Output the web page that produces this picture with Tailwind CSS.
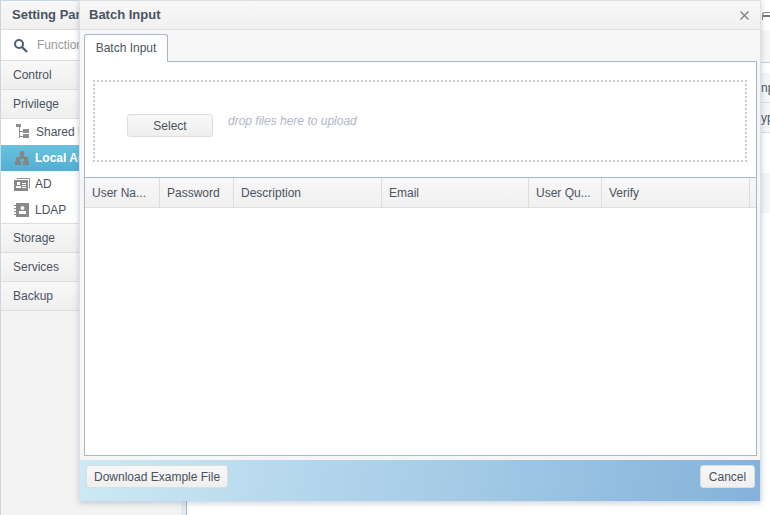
<!DOCTYPE html>
<html lang="en">
<head>
    <meta charset="UTF-8">
    <title>Batch Input</title>
    <script src="https://cdn.jsdelivr.net/npm/@tailwindcss/browser@4"></script>
</head>
<body class="relative w-[770px] h-[515px] overflow-hidden bg-white font-['Liberation_Sans',Arial,sans-serif] text-xs text-[#4a5260]">
    <div class="flex h-full">
        <!-- Setting panel -->
        <aside class="w-[181px] shrink-0 flex flex-col bg-[#f3f3f3] border-l border-t border-[#c9d6e4]">
            <div class="h-[29px] flex items-center pl-[11px] font-bold text-[13px] bg-gradient-to-b from-[#f8f8f8] to-[#f0f0f0] border-b border-[#ddd]">Setting Panel</div>
            <div class="h-[31px] flex items-center pl-3 bg-white border-b border-[#ddd] text-[#999]">
                <svg class="w-[15px] h-[15px] text-[#4a6076]" viewBox="0 0 15 15" fill="none" stroke="currentColor"><circle cx="6" cy="6" r="4" stroke-width="2"/><path d="M9 9l5 5" stroke-width="2.4"/></svg>
                <span class="ml-[9px]">Function</span>
            </div>
            <div class="h-[29px] flex items-center pl-3 bg-gradient-to-b from-[#f8f8f8] to-[#efefef] border-b border-[#ddd]">Control</div>
            <div class="h-[29px] flex items-center pl-3 bg-gradient-to-b from-[#f8f8f8] to-[#efefef] border-b border-[#ddd]">Privilege</div>
            <div class="bg-white">
                <div class="h-[26px] flex items-center pl-[15px] gap-[7px]">
                    <svg class="w-[13px] h-[16px] shrink-0" viewBox="0 0 13 16" fill="#8f8f8f"><path d="M0 0h5v3H0zM3 3h1v11H3zM3 7h4v1H3zM3 12h4v1H3zM7 5h6v4H7zM7 10h6v4H7z"/></svg>
                    <span>Shared Folder</span>
                </div>
                <div class="h-[26px] flex items-center pl-[13px] gap-[5px] bg-gradient-to-b from-[#6cc0de] to-[#4fb0d2] text-white font-bold">
                    <svg class="w-[16px] h-[14px] shrink-0" viewBox="0 0 16 14" fill="#858585"><circle cx="8" cy="2.5" r="2.5"/><path d="M5 5h6v3H5z"/><circle cx="4" cy="8" r="2.2"/><circle cx="12" cy="8" r="2.2"/><path d="M1 10h6v4H1zM9 10h6v4H9z"/></svg>
                    <span>Local Admin</span>
                </div>
                <div class="h-[26px] flex items-center pl-[13px] gap-[5px]">
                    <svg class="w-[16px] h-[13px] shrink-0" viewBox="0 0 16 13"><path fill="none" stroke="#8f8f8f" d="M2.5 0.5h13v10"/><path fill="#8a8a8a" d="M0 2h14v11H0z"/><path fill="#fff" d="M8 5h4v1H8zM8 7h4v1H8zM8 9h4v1H8zM3 4h3v3H3zM2 8h5v2H2z"/></svg>
                    <span>AD</span>
                </div>
                <div class="h-[26px] pb-px flex items-center pl-[13px] gap-[5px]">
                    <svg class="w-[16px] h-[14px] shrink-0" viewBox="0 0 16 14"><path fill="#8a8a8a" d="M2 0h13v14H2zM0 2h3v1H0zM0 5h3v1H0zM0 8h3v1H0zM0 11h3v1H0z"/><circle cx="8.5" cy="5" r="2" fill="#fff"/><path fill="#fff" d="M5 8h7v3H5z"/></svg>
                    <span>LDAP</span>
                </div>
            </div>
            <div class="h-[30px] flex items-center pl-3 bg-gradient-to-b from-[#f8f8f8] to-[#efefef] border-y border-[#ddd]">Storage</div>
            <div class="h-[29px] flex items-center pl-3 bg-gradient-to-b from-[#f8f8f8] to-[#efefef] border-b border-[#ddd]">Services</div>
            <div class="h-[29px] flex items-center pl-3 bg-gradient-to-b from-[#f8f8f8] to-[#efefef] border-b border-[#ddd]">Backup</div>
        </aside>
        <div class="w-[5px] shrink-0 bg-[#e4e9ef]"></div>
        <!-- Main panel behind the dialog -->
        <main class="flex-1 flex flex-col border-l border-[#a9b6c9]">
            <div class="h-[30px] flex justify-end items-center overflow-hidden">
                <div class="w-[8px] h-[8px] rounded-tl-[3px] border-l border-t border-[#888] flex items-center mt-px"><div class="w-full h-[2px] bg-[#777]"></div></div>
            </div>
            <div class="h-[33px] bg-[#f6f6f6] border-b border-[#c9d3df]"></div>
            <div class="h-[10px]"></div>
            <div class="h-[30px] bg-[#f6f6f6] border-b border-[#ddd] flex justify-end items-center overflow-hidden"><span class="w-[9px] overflow-hidden whitespace-nowrap">np</span></div>
            <div class="h-[30px] bg-[#f6f6f6] border-b border-[#ddd] flex justify-end items-center overflow-hidden"><span class="w-[9px] overflow-hidden whitespace-nowrap">yp</span></div>
            <div class="h-[40px]"></div>
            <div class="h-[40px] bg-[#f6f6f6]"></div>
        </main>
    </div>

    <!-- Batch Input dialog -->
    <div class="absolute left-[79px] top-0 w-[682px] h-[501px] flex flex-col bg-[#f6f6f6] border-l border-r border-t border-[#dde1e6] shadow-[0_2px_6px_rgba(90,120,150,0.35)]">
        <div class="h-[29px] shrink-0 flex items-center justify-between pl-[9px] pr-[11px] font-bold text-[13px] bg-gradient-to-b from-[#f8f8f8] to-[#f0f0f0] border-b border-[#ddd]">
            <span>Batch Input</span>
            <svg class="w-[9px] h-[9px]" viewBox="0 0 9 9" fill="none" stroke="#777" stroke-width="1.1"><path d="M0.5 0.5l8 8M8.5 0.5l-8 8"/></svg>
        </div>
        <div class="h-[31px] shrink-0 flex items-end pl-1 relative">
            <div class="relative z-10 -mb-px w-[84px] h-[28px] pb-[2px] flex items-center justify-center bg-white border border-b-0 border-[#a9b6c9] rounded-t-[3px]">Batch Input</div>
        </div>
        <div class="h-[395px] mx-1 w-[673px] flex flex-col bg-white border border-[#a9b6c9]">
            <div class="h-[115px] shrink-0 pt-[18px] pl-2 pr-[9px]">
                <div class="h-[82px] flex items-center pl-[32px] border-2 border-dotted border-[#ccc]">
                    <button class="w-[86px] h-[23px] mt-[8px] pt-[2px] rounded-[3px] border border-[#ddd] bg-gradient-to-b from-[#f8f8f8] to-[#efefef]">Select</button>
                    <span class="ml-[15px] italic text-[#b0b6c8]">drop files here to upload</span>
                </div>
            </div>
            <div class="h-[31px] shrink-0 flex items-stretch bg-gradient-to-b from-[#f8f8f8] to-[#f0f0f0] border-t border-t-[#a9b6c9] border-b border-b-[#ddd]">
                <div class="w-[75px] flex items-center pl-[7px] border-r border-[#ddd]">User Na...</div>
                <div class="w-[74px] flex items-center pl-[7px] border-r border-[#ddd]">Password</div>
                <div class="w-[148px] flex items-center pl-[7px] border-r border-[#ddd]">Description</div>
                <div class="w-[147px] flex items-center pl-[7px] border-r border-[#ddd]">Email</div>
                <div class="w-[73px] flex items-center pl-[7px] border-r border-[#ddd]">User Qu...</div>
                <div class="w-[148px] flex items-center pl-[7px] border-r border-[#ddd]">Verify</div>
            </div>
        </div>
        <div class="mt-1 h-[41px] shrink-0 flex items-start justify-between pt-[5px] pl-[6px] pr-[5px] bg-linear-100 from-[#cde9f5] to-[#84b2da]">
            <button class="h-[23px] px-[7px] rounded-[3px] border border-[#ddd] bg-gradient-to-b from-[#f8f8f8] to-[#efefef]">Download Example File</button>
            <button class="h-[23px] w-[55px] rounded-[3px] border border-[#ddd] bg-gradient-to-b from-[#f8f8f8] to-[#efefef]">Cancel</button>
        </div>
    </div>
</body>
</html>
